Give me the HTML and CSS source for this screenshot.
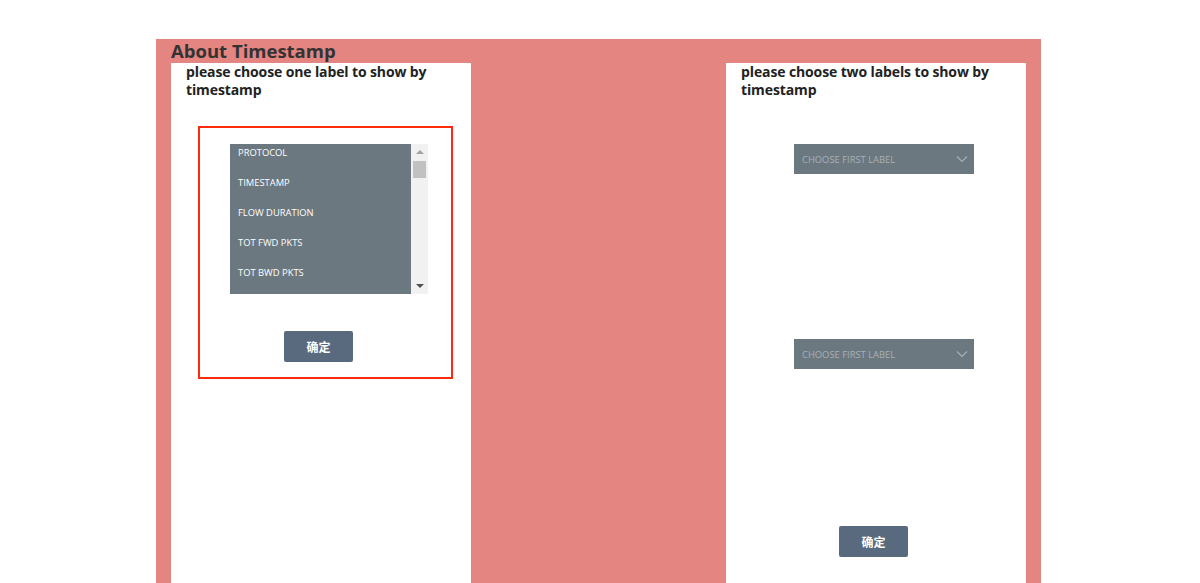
FILE: index.html
```html
<!DOCTYPE html>
<html>
<head>
<meta charset="utf-8">
<link rel="stylesheet" href="styles.css">
</head>
<body>
<div class="wrap">
  <div class="board">
    <h1 class="title">About Timestamp</h1>
    <div class="panels">
      <div class="panel">
        <h2 class="panel-head">please choose one label to show by timestamp</h2>
        <div class="hl-box">
          <div class="listbox">
            <div class="list-items">
              <div class="item">PROTOCOL</div>
              <div class="item">TIMESTAMP</div>
              <div class="item">FLOW DURATION</div>
              <div class="item">TOT FWD PKTS</div>
              <div class="item">TOT BWD PKTS</div>
            </div>
            <div class="scrollbar">
              <span class="arrow up"></span>
              <span class="thumb"></span>
              <span class="arrow down"></span>
            </div>
          </div>
          <button class="btn btn-left">确定</button>
        </div>
      </div>
      <div class="panel panel-right">
        <h2 class="panel-head">please choose two labels to show by timestamp</h2>
        <div class="select sel-1">
          <span>CHOOSE FIRST LABEL</span>
          <svg class="chev" width="12" height="8" viewBox="0 0 12 8"><path d="M1 1.5 L6 6.5 L11 1.5" fill="none" stroke="#a9b0b4" stroke-width="1.1"/></svg>
        </div>
        <div class="select sel-2">
          <span>CHOOSE FIRST LABEL</span>
          <svg class="chev" width="12" height="8" viewBox="0 0 12 8"><path d="M1 1.5 L6 6.5 L11 1.5" fill="none" stroke="#a9b0b4" stroke-width="1.1"/></svg>
        </div>
        <button class="btn btn-right">确定</button>
      </div>
    </div>
  </div>
</div>
</body>
</html>
```

FILE: styles.css
```css
html, body {
  margin: 0;
  padding: 0;
  background: #ffffff;
  height: 100%;
  overflow: hidden;
}
body {
  font-family: "Open Sans", "Noto Sans", "Noto Sans CJK SC", sans-serif;
  color: #333333;
}
.wrap {
  padding-top: 39px;
  padding-left: 156px;
}
.board {
  width: 885px;
  height: 560px;
  background: #e48582;
  box-sizing: border-box;
  padding: 0 15px;
}
.title {
  margin: 0;
  font-size: 18.5px;
  line-height: 24px;
  font-weight: 700;
  color: #333333;
}
.panels {
  display: flex;
  justify-content: space-between;
}
.panel {
  width: 300px;
  height: 540px;
  background: #ffffff;
  display: flex;
  flex-direction: column;
  align-items: flex-start;
}
.panel-head {
  margin: 0;
  padding: 0 15px;
  font-size: 14px;
  line-height: 18px;
  font-weight: 700;
  color: #222222;
  letter-spacing: -0.12px;
  width: 270px;
}
.hl-box {
  margin-top: 27px;
  margin-left: 27px;
  width: 255px;
  height: 253px;
  box-sizing: border-box;
  border: 2px solid #ff2a0c;
  display: flex;
  flex-direction: column;
  align-items: flex-start;
}
.listbox {
  margin-top: 16px;
  margin-left: 30px;
  width: 198px;
  height: 150px;
  display: flex;
  overflow: hidden;
}
.list-items {
  flex: 1;
  background: #6c7880;
  overflow: hidden;
  padding-top: 0;
}
.item {
  height: 30px;
  line-height: 30px;
  padding-left: 8px;
  font-size: 9.4px;
  color: #ffffff;
  position: relative;
  top: -6px;
}
.scrollbar {
  width: 17px;
  background: #f1f1f1;
  display: flex;
  flex-direction: column;
  align-items: center;
}
.arrow {
  width: 0;
  height: 0;
  border-left: 4px solid transparent;
  border-right: 4px solid transparent;
}
.arrow.up {
  margin-top: 6px;
  border-bottom: 4px solid #a3a3a3;
}
.arrow.down {
  margin-top: auto;
  margin-bottom: 6px;
  border-top: 4px solid #505050;
}
.thumb {
  margin-top: 7px;
  width: 13px;
  height: 17px;
  background: #c1c1c1;
}
.btn {
  width: 69px;
  height: 31px;
  border: 0;
  border-radius: 2px;
  background: #5a6a7e;
  color: #ffffff;
  font-family: "Noto Sans CJK SC", sans-serif;
  font-size: 12px;
  font-weight: 700;
  padding: 0;
}
.btn-left {
  margin-top: 37px;
  margin-left: 84px;
}
.select {
  margin-left: 68px;
  width: 180px;
  height: 30px;
  background: #6c7880;
  display: flex;
  align-items: center;
  justify-content: space-between;
  box-sizing: border-box;
  padding: 0 6px 0 8px;
  color: #a9b0b4;
  font-size: 9.4px;
}
.sel-1 { margin-top: 45px; }
.sel-2 { margin-top: 165px; }
.btn-right {
  margin-top: 157px;
  margin-left: 113px;
}
```
